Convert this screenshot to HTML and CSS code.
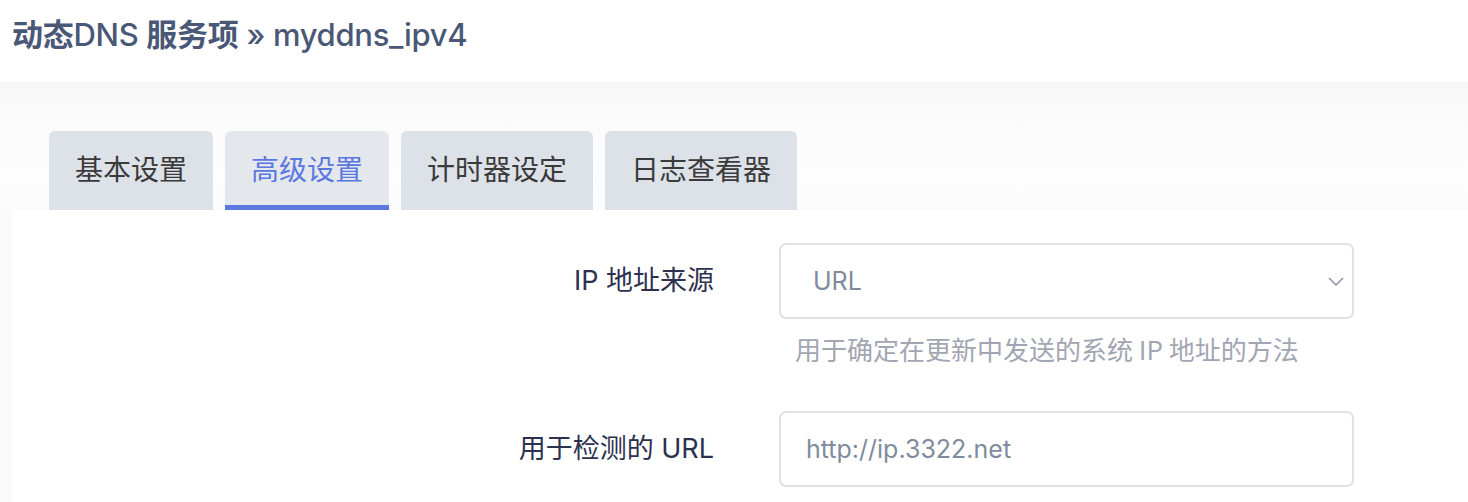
FILE: index.html
```html
<!DOCTYPE html>
<html lang="zh">
<head>
<meta charset="utf-8">
<title>动态DNS 服务项</title>
<link rel="stylesheet" href="styles.css">
</head>
<body>
<header class="top">
  <h2 class="title"><span class="cjk">动态</span>DNS <span class="cjk">服务项</span> » myddns_ipv4</h2>
</header>
<main class="main">
  <ul class="tabs">
    <li class="tab">基本设置</li>
    <li class="tab active">高级设置</li>
    <li class="tab">计时器设定</li>
    <li class="tab">日志查看器</li>
  </ul>
  <section class="panel">
    <div class="row has-help">
      <label class="label">IP 地址来源</label>
      <div class="field">
        <div class="select">
          <span class="value">URL</span>
          <svg class="chev" width="16" height="9" viewBox="0 0 16 9"><path d="M1 1l7 7 7-7" fill="none" stroke="#8a94a8" stroke-width="1.5"/></svg>
        </div>
        <div class="help">用于确定在更新中发送的系统 IP 地址的方法</div>
      </div>
    </div>
    <div class="row">
      <label class="label">用于检测的 URL</label>
      <div class="field">
        <div class="input"><span class="value">http://ip.3322.net</span></div>
      </div>
    </div>
  </section>
</main>
</body>
</html>
```
FILE: styles.css
```css
html, body {
  margin: 0;
  padding: 0;
  background: #ffffff;
  font-family: "Inter", "Noto Sans CJK SC", sans-serif;
  overflow: hidden;
}
.top {
  height: 82px;
  background: #fff;
  padding-left: 12px;
  display: flex;
  align-items: center;
  box-sizing: border-box;
  position: relative;
  z-index: 1;
}
.title {
  margin: 0;
  margin-top: -18px;
  font-size: 31px;
  font-weight: 500;
  color: #4a5877;
  letter-spacing: -0.3px;
}
.title .cjk {
  font-family: "Noto Sans CJK SC", sans-serif;
  font-weight: 700;
}
.main {
  background: linear-gradient(to bottom, #f7f7f8 0px, #fcfcfc 50px, #fdfdfd 100px, #fbfbfc 140px);
  padding-left: 12px;
  padding-top: 49px;
  min-height: 420px;
}
.tabs {
  list-style: none;
  margin: 0;
  padding: 0 0 0 37px;
  display: flex;
  gap: 12px;
}
.tab {
  height: 79px;
  padding: 0 26px 5px;
  background: #dde2e8;
  border-radius: 6px 6px 0 0;
  display: flex;
  align-items: center;
  font-size: 28px;
  color: #3a3a3a;
  box-sizing: border-box;
  font-family: "Noto Sans CJK SC", sans-serif;
}
.tab.active {
  background: #e4e8ed;
  color: #5b78e0;
  border-bottom: 5px solid #5b78e0;
  padding-bottom: 0;
}
.panel {
  background: #fff;
  border-radius: 6px 0 0 0;
  padding-top: 33px;
  min-height: 300px;
}
.row {
  display: flex;
  align-items: flex-start;
  margin-bottom: 16px;
}
.row.has-help {
  margin-bottom: 48px;
}
.label {
  width: 767px;
  text-align: right;
  font-size: 27px;
  color: #2d3150;
  line-height: 76px;
  padding-right: 65px;
  box-sizing: border-box;
  flex: none;
}
.field {
  width: 575px;
}
.select, .input {
  height: 76px;
  border: 2px solid #dfe2e7;
  border-radius: 7px;
  box-sizing: border-box;
  display: flex;
  align-items: center;
  padding: 0 8px 0 32px;
  justify-content: space-between;
}
.input {
  padding-left: 25px;
}
.value {
  font-size: 25px;
  color: #808b9e;
}
.chev {
  display: block;
}
.help {
  font-size: 26px;
  color: #a2a6b2;
  padding-left: 16px;
  margin-top: 16px;
  line-height: 28px;
  font-family: "Noto Sans CJK SC", sans-serif;
}
```
